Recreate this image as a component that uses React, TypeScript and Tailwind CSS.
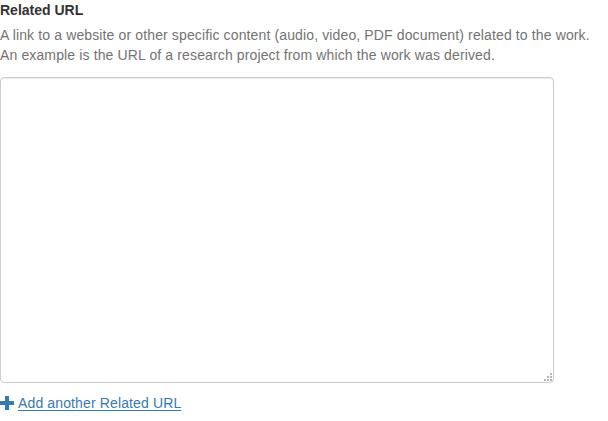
const PlusGlyph = () => (
  <svg width="14" height="14" viewBox="0 0 14 14" className="shrink-0 -mt-[1px]">
    <rect x="5" y="0" width="4" height="14" fill="#337ab7" />
    <rect x="0" y="5" width="14" height="4" fill="#337ab7" />
  </svg>
);

const Grip = () => (
  <svg width="9" height="9" viewBox="0 0 9 9" className="absolute right-[2px] bottom-[2px] pointer-events-none">
    {[
      [7, 1],
      [7, 4],
      [4, 4],
      [7, 7],
      [4, 7],
      [1, 7],
    ].map(([x, y]) => (
      <rect key={`${x}-${y}`} x={x} y={y} width="2" height="2" fill="#b5b5b5" />
    ))}
  </svg>
);

const App = () => {
  return (
    <div className="w-[608px] h-[421px] bg-white text-[14px] leading-5 text-[#333] tracking-[0.13px] font-['Liberation_Sans',Arial,sans-serif]">
      <label className="block font-bold tracking-normal">Related URL</label>
      <p className="mt-[5px] text-[#737373]">
        A link to a website or other specific content (audio, video, PDF document) related to the work.
        <br />
        An example is the URL of a research project from which the work was derived.
      </p>
      <div className="relative mt-3 w-[554px] h-[306px]">
        <textarea
          className="block w-full h-full resize-none border border-[#ccc] rounded-[4px] bg-white shadow-[inset_0_1px_1px_rgba(0,0,0,0.075)] outline-none"
          aria-label="Related URL"
        />
        <Grip />
      </div>
      <a href="#" className="mt-[10px] inline-flex items-center gap-[4px] text-[#337ab7]">
        <PlusGlyph />
        <span className="underline underline-offset-2">Add another Related URL</span>
      </a>
    </div>
  );
};

export default App;
